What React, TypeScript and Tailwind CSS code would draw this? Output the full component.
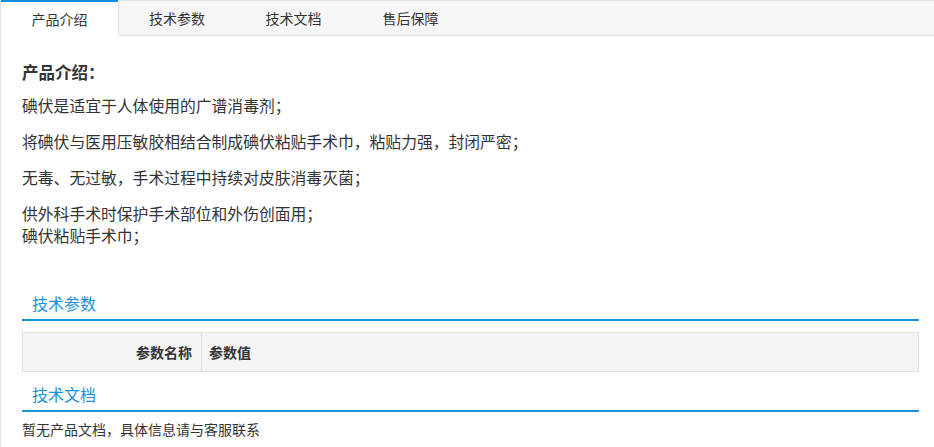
const tabs = ['产品介绍', '技术参数', '技术文档', '售后保障']

const intro = [
    '碘伏是适宜于人体使用的广谱消毒剂；',
    '将碘伏与医用压敏胶相结合制成碘伏粘贴手术巾，粘贴力强，封闭严密；',
    '无毒、无过敏，手术过程中持续对皮肤消毒灭菌；'
]

function SectionTitle({ title, className }: { title: string; className?: string }) {
    return (
        <div className={`border-b-2 border-[#1a8ee1] pl-[10px] pb-[3px] text-[16px] leading-[25px] text-[#1a8fd8] ${className ?? ''}`}>
            {title}
        </div>
    )
}

export default function App() {
    return (
        <div className="h-[447px] w-[934px] overflow-hidden border-l border-[#e2e2e2] bg-white font-['Microsoft_YaHei','Noto_Sans_CJK_SC',sans-serif] text-[#333]">
            <div className="flex h-[36px] border-t border-b border-[#e3e3e3] bg-[#f6f6f6]">
                {tabs.map((tab, i) => (
                    <div
                        key={tab}
                        className={
                            i === 0
                                ? '-mt-px -mb-px flex w-[117px] items-center justify-center border-t-2 border-[#0a8ce8] bg-white text-[14px]'
                                : `flex w-[117px] items-center justify-center text-[14px] ${i === 1 ? 'border-l border-[#e3e3e3]' : ''}`
                        }
                    >
                        {tab}
                    </div>
                ))}
            </div>

            <div className="pl-[21px] pr-[15px]">
                <h3 className="mt-[25px] text-[16.5px] font-bold leading-[22px]">产品介绍：</h3>
                {intro.map((line, i) => (
                    <p key={i} className={`text-[15.8px] leading-[22px] ${i === 0 ? 'mt-[12px]' : 'mt-[14px]'}`}>
                        {line}
                    </p>
                ))}
                <p className="mt-[14px] text-[15.8px] leading-[22px]">
                    供外科手术时保护手术部位和外伤创面用；
                    <br />
                    碘伏粘贴手术巾；
                </p>

                <SectionTitle title="技术参数" className="mt-[44px]" />
                <div className="mt-[11px] flex h-[40px] border border-[#dedede] border-t-[#eedfd5] bg-[#f4f4f4] text-[14px] font-bold">
                    <div className="flex w-[179px] items-center justify-end border-r border-[#dedede] pr-[9px]">参数名称</div>
                    <div className="flex items-center pl-[7px]">参数值</div>
                </div>

                <SectionTitle title="技术文档" className="mt-[10px]" />
                <p className="mt-[6px] text-[14px] leading-[22px]">暂无产品文档，具体信息请与客服联系</p>
            </div>
        </div>
    )
}
